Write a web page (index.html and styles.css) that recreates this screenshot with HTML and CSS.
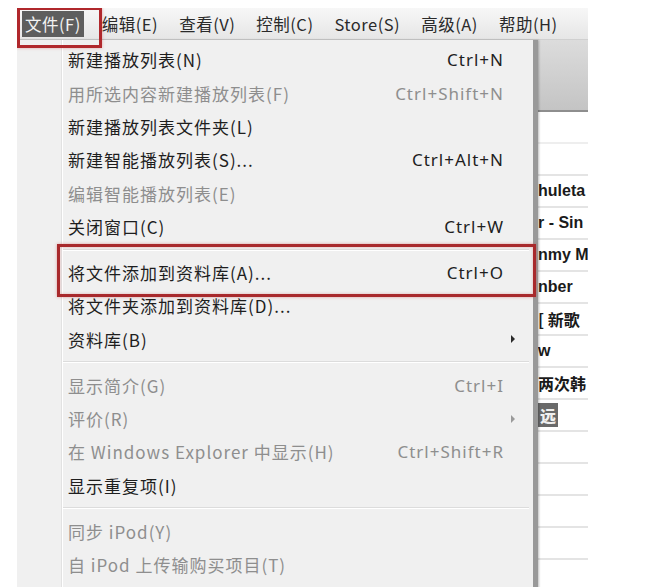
FILE: index.html
```html
<!DOCTYPE html>
<html lang="zh-CN">
<head>
<meta charset="utf-8">
<title>iTunes 文件菜单</title>
<link rel="stylesheet" href="styles.css">
</head>
<body>
<div class="screen">
  <div class="app">
    <div class="menubar">
      <span class="mitem active">文件(F)</span>
      <span class="mitem">编辑(E)</span>
      <span class="mitem">查看(V)</span>
      <span class="mitem">控制(C)</span>
      <span class="mitem">Store(S)</span>
      <span class="mitem">高级(A)</span>
      <span class="mitem">帮助(H)</span>
    </div>
    <div class="toolbar"></div>
    <div class="list">
      <div class="lrow"></div>
      <div class="lrow"></div>
      <div class="lrow"><span class="ltxt">huleta</span></div>
      <div class="lrow"><span class="ltxt">r - Sin</span></div>
      <div class="lrow"><span class="ltxt">nmy M</span></div>
      <div class="lrow"><span class="ltxt">nber</span></div>
      <div class="lrow"><span class="ltxt cjk">[ 新歌</span></div>
      <div class="lrow"><span class="ltxt">w</span></div>
      <div class="lrow"><span class="ltxt cjk">两次韩</span></div>
      <div class="lrow"><span class="ltxt cjk"><b class="sel">远</b></span></div>
      <div class="lrow"></div>
      <div class="lrow"></div>
      <div class="lrow"></div>
      <div class="lrow"></div>
      <div class="lrow"></div>
    </div>

    <div class="dropdown">
      <div class="row"><span class="lbl">新建播放列表(N)</span><span class="key">Ctrl+N</span></div>
      <div class="row dis"><span class="lbl">用所选内容新建播放列表(F)</span><span class="key">Ctrl+Shift+N</span></div>
      <div class="row"><span class="lbl">新建播放列表文件夹(L)</span></div>
      <div class="row"><span class="lbl">新建智能播放列表(S)...</span><span class="key">Ctrl+Alt+N</span></div>
      <div class="row dis"><span class="lbl">编辑智能播放列表(E)</span></div>
      <div class="row"><span class="lbl">关闭窗口(C)</span><span class="key">Ctrl+W</span></div>
      <div class="sep"></div>
      <div class="row marked"><span class="lbl">将文件添加到资料库(A)...</span><span class="key">Ctrl+O</span><span class="mark"></span></div>
      <div class="row"><span class="lbl">将文件夹添加到资料库(D)...</span></div>
      <div class="row"><span class="lbl">资料库(B)</span><span class="arrow"></span></div>
      <div class="sep"></div>
      <div class="row dis"><span class="lbl">显示简介(G)</span><span class="key">Ctrl+I</span></div>
      <div class="row dis"><span class="lbl">评价(R)</span><span class="arrow"></span></div>
      <div class="row dis"><span class="lbl">在 Windows Explorer 中显示(H)</span><span class="key">Ctrl+Shift+R</span></div>
      <div class="row"><span class="lbl">显示重复项(I)</span></div>
      <div class="sep"></div>
      <div class="row dis"><span class="lbl">同步 iPod(Y)</span></div>
      <div class="row dis"><span class="lbl">自 iPod 上传输购买项目(T)</span></div>
    </div>

    <div class="file-mark"></div>
  </div>
</div>
</body>
</html>
```

FILE: styles.css
```css
html, body {
  margin: 0;
  padding: 0;
  background: #ffffff;
}

body {
  width: 650px;
  height: 587px;
  overflow: hidden;
  font-family: "Noto Sans CJK SC", "Noto Sans", sans-serif;
}

.screen {
  padding: 8px 0 0 17px;
}

.app {
  position: relative;
  width: 571px;
  height: 579px;
  overflow: hidden;
}

.menubar {
  height: 32px;
  display: flex;
  align-items: center;
  gap: 15px;
  padding-left: 5px;
  background: linear-gradient(#f7f7f7, #e6e6e6);
  border-bottom: 1px solid #d0d0d0;
  box-sizing: border-box;
  white-space: nowrap;
}

.mitem {
  font-size: 16.5px;
  letter-spacing: 0.5px;
  color: #2a2a2a;
  height: 26px;
  line-height: 26px;
  padding: 0 3px;
}

.mitem.active {
  background: #5e5e5e;
  color: #f2f2f2;
}

.toolbar {
  height: 70px;
  background: linear-gradient(#dcdcdc, #c4c4c4);
  border-bottom: 2px solid #8e8e8e;
}

.list {
  display: flex;
  flex-direction: column;
}

.lrow {
  height: 32px;
  box-sizing: border-box;
  border-bottom: 2px solid #e4e4e4;
  display: flex;
  align-items: center;
  padding-left: 521px;
  white-space: nowrap;
  overflow: hidden;
}

.lrow:first-child {
  border-bottom-color: #eeeeee;
}

.ltxt {
  font-family: "Liberation Sans", "Noto Sans CJK SC", sans-serif;
  font-weight: bold;
  font-size: 16px;
  color: #1a1a1a;
}

.ltxt.cjk {
  font-family: "Noto Sans CJK SC", sans-serif;
}

.sel {
  background: #6a6a6a;
  color: #f0f0f0;
  padding: 0 2px;
}

.dropdown {
  position: absolute;
  left: 0;
  top: 32px;
  width: 521px;
  height: 560px;
  background: #f0f0f0;
  padding-top: 3px;
  box-sizing: border-box;
  border-right: 5px solid #999999;
  box-shadow: 1px 0 2px rgba(0, 0, 0, 0.25);
  background-image: linear-gradient(90deg, transparent 44px, #e2e2e2 44px, #e2e2e2 45px, #ffffff 45px, #ffffff 46px, transparent 46px);
}

.row {
  position: relative;
  height: 33.4px;
  display: flex;
  align-items: center;
  padding-left: 51px;
  padding-right: 30px;
  font-size: 17px;
  letter-spacing: 1px;
  color: #1e1e1e;
  white-space: nowrap;
}

.row.dis {
  color: #8e8e8e;
}

.lbl {
  flex: 1;
}

.key {
  font-family: "Noto Sans", sans-serif;
  font-size: 17px;
  letter-spacing: 1px;
  margin-right: -1px;
}

.arrow {
  width: 0;
  height: 0;
  border-top: 4px solid transparent;
  border-bottom: 4px solid transparent;
  border-left: 4px solid #2a2a2a;
  margin-right: -12px;
}

.row.dis .arrow {
  border-left-color: #9a9a9a;
}

.sep {
  height: 12.5px;
  display: flex;
  align-items: center;
  margin-left: 46px;
  margin-right: 4px;
}

.sep::before {
  content: "";
  display: block;
  width: 100%;
  height: 1px;
  background: #dcdcdc;
  border-bottom: 1px solid #ffffff;
}

.mark {
  position: absolute;
  left: 40px;
  right: -3px;
  top: -12px;
  bottom: -8px;
  border: 3px solid #a8292c;
  box-shadow: 0 0 3px rgba(200, 60, 60, 0.45), inset 0 0 3px rgba(200, 60, 60, 0.35);
  pointer-events: none;
}

.file-mark {
  position: absolute;
  left: 0;
  top: -1px;
  width: 85px;
  height: 41px;
  box-sizing: border-box;
  border: 3px solid #b0282c;
  box-shadow: 0 0 3px rgba(200, 60, 60, 0.4);
}
```
